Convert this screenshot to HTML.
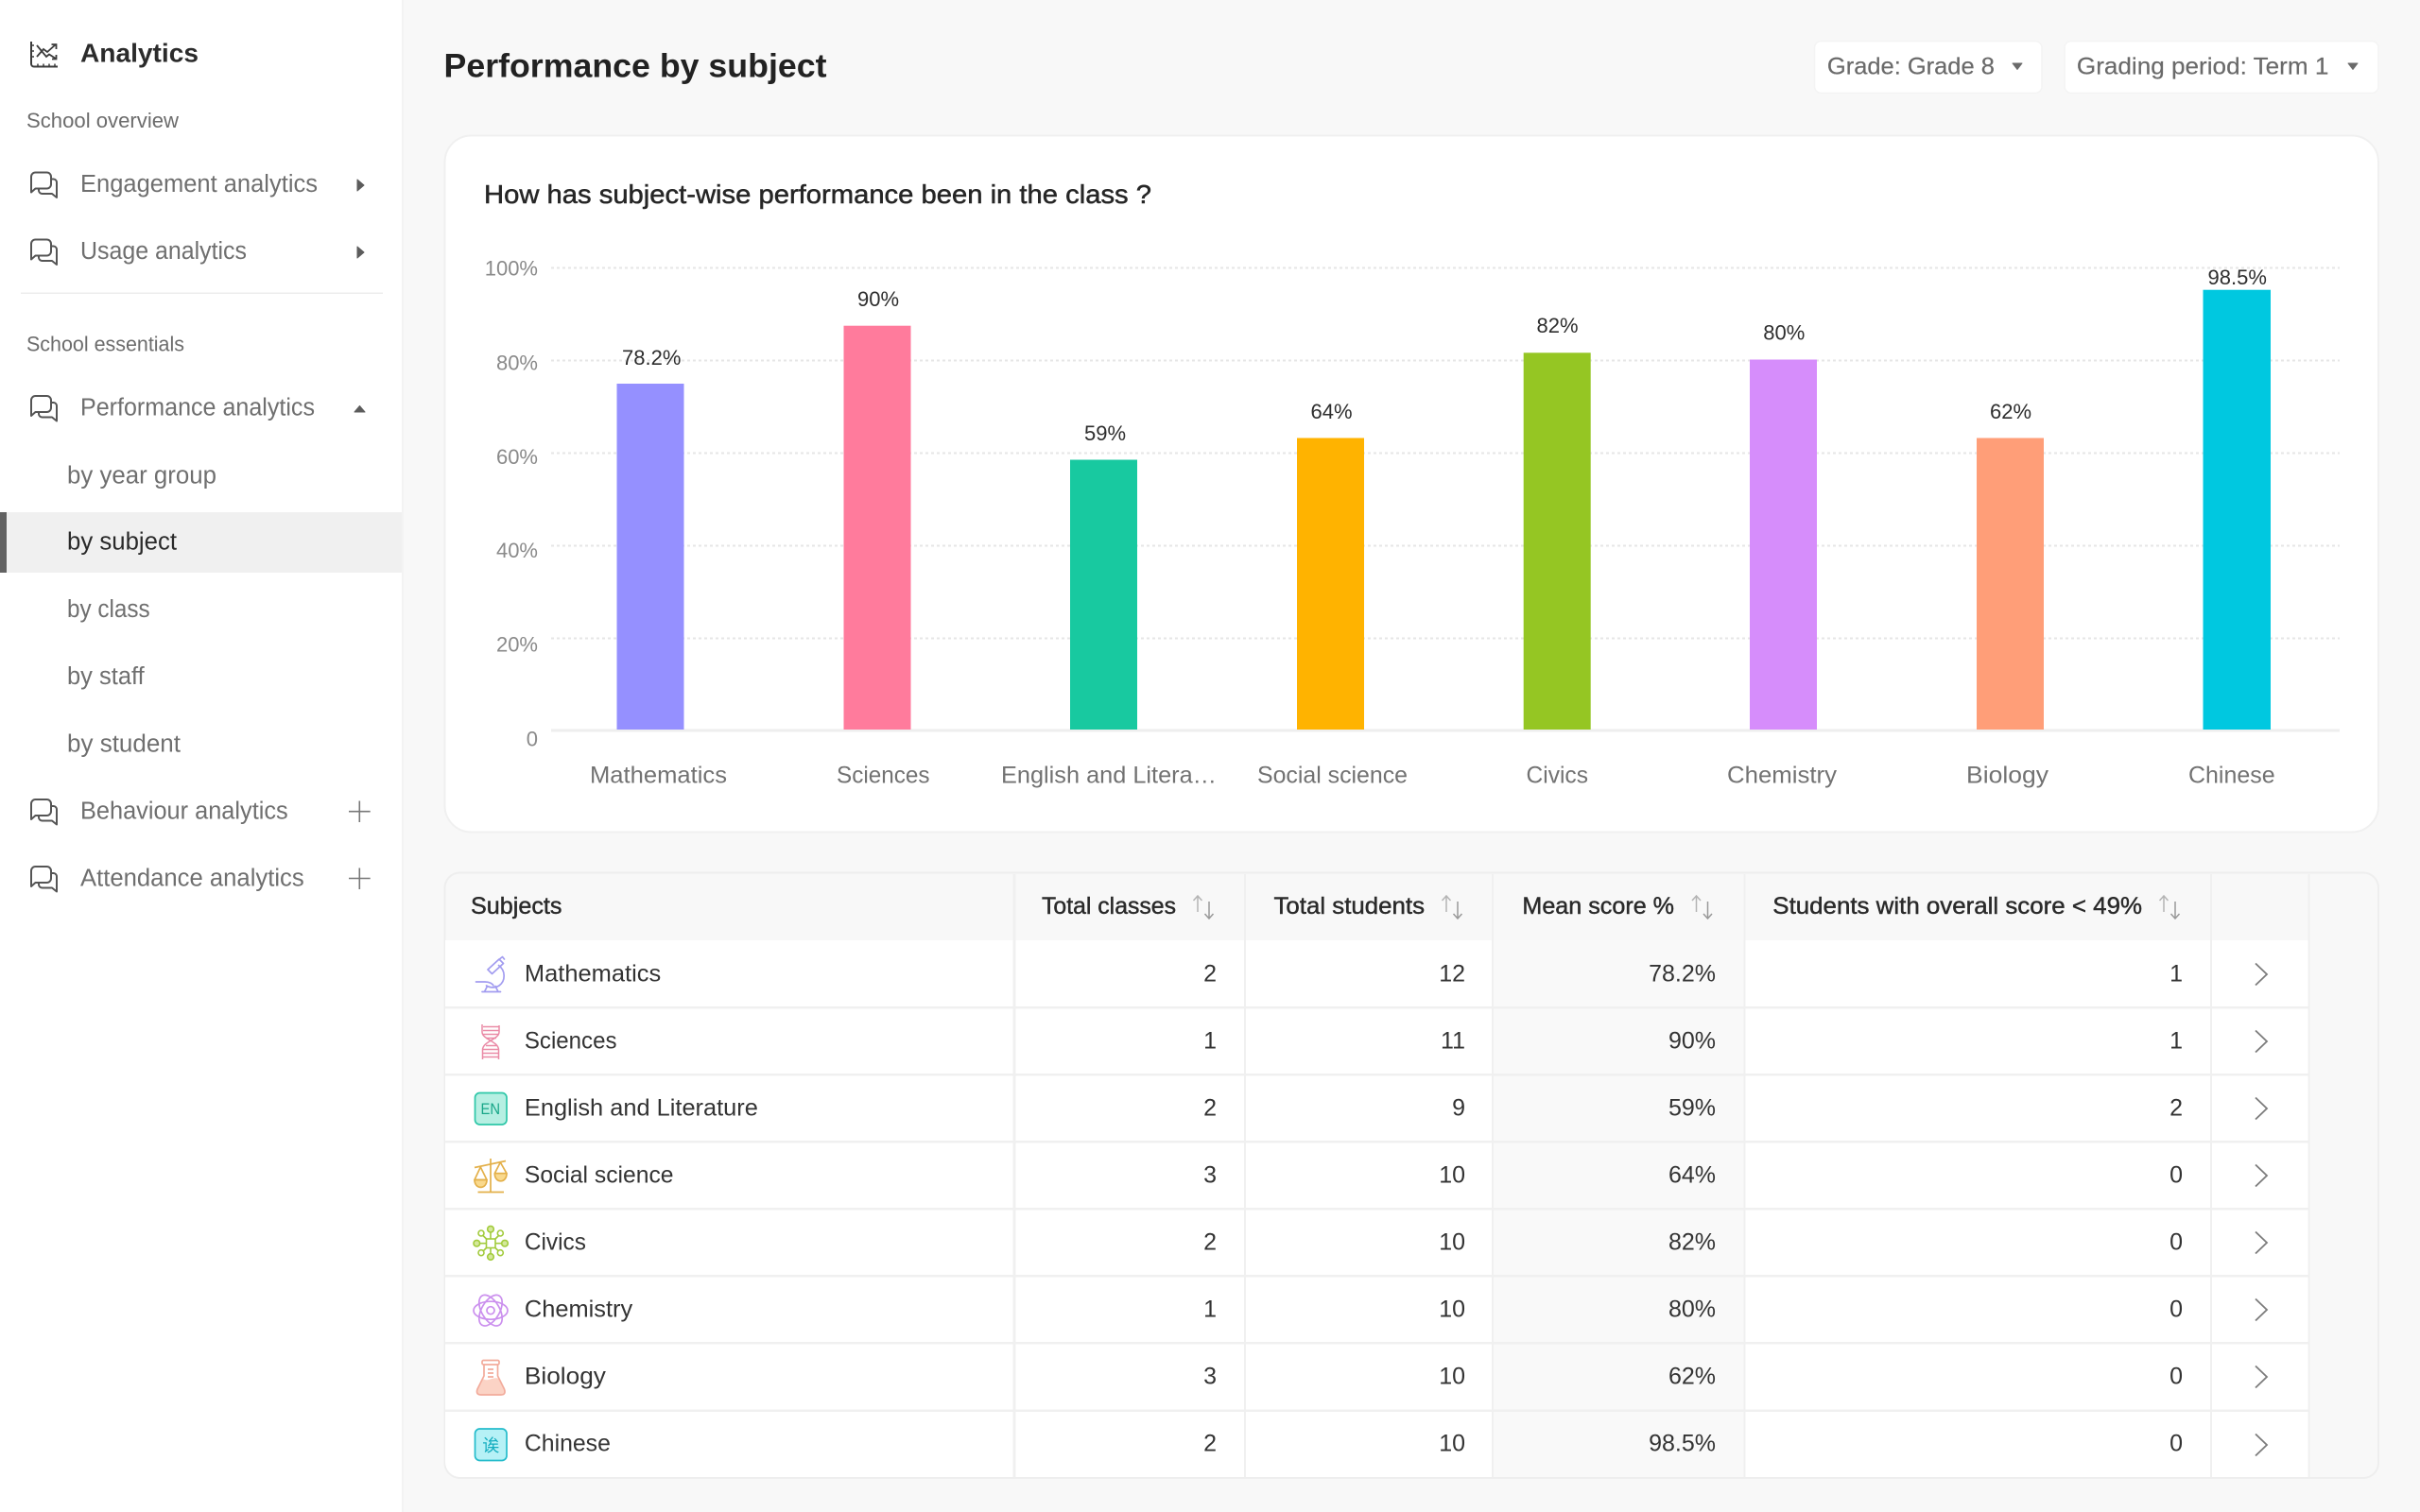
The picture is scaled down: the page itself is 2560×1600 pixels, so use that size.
<!DOCTYPE html>
<html lang="en">
<head>
<meta charset="utf-8">
<title>Performance by subject</title>
<style>
html,body{margin:0;padding:0;width:2560px;height:1600px;overflow:hidden;background:#f8f8f8}
svg{display:block;position:absolute;left:0;top:0}
text{font-family:"Liberation Sans","Noto Sans CJK SC",sans-serif;white-space:pre}
.nav{font-size:25.5px;fill:#6f6f6f;transform:translate(-1px,.6px)}
.cap{font-size:22px;fill:#6c6c6c;transform:translate(-1px,0)}
.act{font-size:25.5px;fill:#2a2a2a;transform:translate(-1px,.6px)}
.h1{font-size:35px;font-weight:700;fill:#222;transform:translate(-1.500px,0)}
.brand{font-size:27.5px;font-weight:700;fill:#2b2b2b;transform:translate(-1px,0)}
.dd{font-size:25px;fill:#6a6a6a;stroke:#6a6a6a;stroke-width:.2px;transform:translate(-.6px,0)}
.title{font-size:28px;fill:#262626;stroke:#262626;stroke-width:.5px;transform:translate(-1px,0)}
.yl{font-size:22px;fill:#8a8a8a;text-anchor:end}
.dl{font-size:22px;fill:#2e2e2e}
.xl{font-size:25px;fill:#727272}
.th{font-size:25px;fill:#2a2a2a;stroke:#2a2a2a;stroke-width:.45px;transform:translate(0,.4px)}
.td{font-size:25px;fill:#333;transform:translate(-.8px,.7px)}
.n{font-size:25px;fill:#333;text-anchor:end;transform:translate(0,.7px)}
</style>
</head>
<body>
<svg width="2560" height="1600" viewBox="0 0 2560 1600" xmlns="http://www.w3.org/2000/svg">
<defs>
<symbol id="chat" viewBox="0 0 29 28" overflow="visible">
<path d="M1 22V5.5A4.5 4.5 0 0 1 5.5 1H17.5A4.5 4.5 0 0 1 22 5.5V13.5A4.5 4.5 0 0 1 17.5 18H5.5Z" fill="none" stroke="#555" stroke-width="2" stroke-linejoin="round"/>
<path d="M22 8H24.5A3.5 3.5 0 0 1 28 11.5V27.5L23 23.5H12.5A3.5 3.5 0 0 1 9 20V18" fill="none" stroke="#555" stroke-width="2" stroke-linejoin="round"/>
</symbol>
<symbol id="sort" viewBox="0 0 24 24" overflow="visible">
<path d="M6 0V17M1.5 5L6 0L10.5 5" fill="none" stroke="#b4b4b4" stroke-width="1.500"/>
<path d="M18 6V24M13.5 19L18 24L22.500 19" fill="none" stroke="#999" stroke-width="1.500"/>
</symbol>
<symbol id="chev" viewBox="0 0 14 24" overflow="visible">
<path d="M1 0.5L13 12L1 23.5" fill="none" stroke="#7c7c7c" stroke-width="1.800"/>
</symbol>
<clipPath id="tc"><rect x="471" y="924" width="2044" height="639" rx="16"/></clipPath>
</defs>

<rect x="0" y="0" width="2560" height="1600" fill="#f8f8f8"/>

<!-- sidebar -->
<rect x="0" y="0" width="425" height="1600" fill="#fff"/>
<rect x="425" y="0" width="2" height="1600" fill="#f3f3f3"/>

<g fill="none" stroke="#3c3c3c">
<path d="M33 44V67.5A3 3 0 0 0 36 70.5H61" stroke-width="2"/>
<path d="M33 48H36M33 54H36M33 60H36M40 67.5V70.5M46 67.5V70.5M52 67.5V70.5M58 67.5V70.5" stroke-width="1.500"/>
<path d="M39 48L49 60L52 57.500L59 62M55 62.500H59.500V58" stroke-width="1.800"/>
<path d="M39 60L46 52L50 55L59 47M54.500 47H59.500V52" stroke-width="1.800"/>
</g>
<text class="brand" x="86" y="65.700" textLength="125" lengthAdjust="spacingAndGlyphs">Analytics</text>

<text class="cap" x="29" y="135" textLength="161" lengthAdjust="spacingAndGlyphs">School overview</text>

<use href="#chat" x="32" y="181.5" width="29" height="28"/>
<text class="nav" x="86" y="202.3" textLength="251" lengthAdjust="spacingAndGlyphs">Engagement analytics</text>
<path d="M378 190L385 196L378 202Z" fill="#5c5c5c" stroke="#5c5c5c" stroke-linejoin="round"/>

<use href="#chat" x="32" y="252.5" width="29" height="28"/>
<text class="nav" x="86" y="273.3" textLength="176" lengthAdjust="spacingAndGlyphs">Usage analytics</text>
<path d="M378 261L385 267L378 273Z" fill="#5c5c5c" stroke="#5c5c5c" stroke-linejoin="round"/>

<rect x="22" y="309.5" width="383" height="1.500" fill="#ececec"/>

<text class="cap" x="29" y="371.7" textLength="167" lengthAdjust="spacingAndGlyphs">School essentials</text>

<use href="#chat" x="32" y="418" width="29" height="28"/>
<text class="nav" x="86" y="439" textLength="248" lengthAdjust="spacingAndGlyphs">Performance analytics</text>
<path d="M375 436L380.5 429.5L386 436Z" fill="#5c5c5c" stroke="#5c5c5c" stroke-linejoin="round"/>

<text class="nav" x="72" y="510.7" textLength="158" lengthAdjust="spacingAndGlyphs">by year group</text>

<rect x="0" y="542" width="425" height="64" fill="#f0f0f0"/>
<rect x="0" y="542" width="7" height="64" fill="#626262"/>
<text class="act" x="72" y="581" textLength="116" lengthAdjust="spacingAndGlyphs">by subject</text>

<text class="nav" x="72" y="652.3" textLength="87.7" lengthAdjust="spacingAndGlyphs">by class</text>
<text class="nav" x="72" y="723.3" textLength="81.7" lengthAdjust="spacingAndGlyphs">by staff</text>
<text class="nav" x="72" y="794.7" textLength="120" lengthAdjust="spacingAndGlyphs">by student</text>

<use href="#chat" x="32" y="845" width="29" height="28"/>
<text class="nav" x="86" y="865.7" textLength="219.7" lengthAdjust="spacingAndGlyphs">Behaviour analytics</text>
<path d="M369 858.7H391.7M380.3 847.5V870" stroke="#777" stroke-width="1.600" fill="none"/>

<use href="#chat" x="32" y="916" width="29" height="28"/>
<text class="nav" x="86" y="936.7" textLength="236.7" lengthAdjust="spacingAndGlyphs">Attendance analytics</text>
<path d="M369 929.5H391.7M380.3 918.5V941" stroke="#777" stroke-width="1.600" fill="none"/>

<!-- header -->
<text class="h1" x="471" y="81.7" textLength="405" lengthAdjust="spacingAndGlyphs">Performance by subject</text>

<rect x="1919.5" y="43.5" width="240.5" height="55" rx="7" fill="#fff" stroke="#f4f4f4" stroke-width="1.500"/>
<text class="dd" x="1933.5" y="78.3" textLength="177" lengthAdjust="spacingAndGlyphs">Grade: Grade 8</text>
<path d="M2129 67H2139L2134 73.5Z" fill="#6a6a6a" stroke="#6a6a6a" stroke-linejoin="round"/>

<rect x="2184" y="43.5" width="332" height="55" rx="7" fill="#fff" stroke="#f4f4f4" stroke-width="1.500"/>
<text class="dd" x="2197.5" y="78.3" textLength="266.5" lengthAdjust="spacingAndGlyphs">Grading period: Term 1</text>
<path d="M2484 67H2494L2489 73.5Z" fill="#6a6a6a" stroke="#6a6a6a" stroke-linejoin="round"/>

<!-- chart card -->
<rect x="470.5" y="143.5" width="2045.5" height="737" rx="28" fill="#fff" stroke="#f0f0f0" stroke-width="2"/>
<text class="title" x="513" y="215" textLength="706" lengthAdjust="spacingAndGlyphs">How has subject-wise performance been in the class ?</text>

<g stroke="#e6e6e6" stroke-width="2" stroke-dasharray="3 3" fill="none">
<path d="M583 283.5H2475M583 381.5H2475M583 479.5H2475M583 577.5H2475M583 675.5H2475"/>
</g>
<rect x="583" y="771.5" width="1892" height="3" fill="#eeeeee"/>

<text class="yl" x="569" y="291.7">100%</text>
<text class="yl" x="569" y="391.3">80%</text>
<text class="yl" x="569" y="491">60%</text>
<text class="yl" x="569" y="590">40%</text>
<text class="yl" x="569" y="689.5">20%</text>
<text class="yl" x="569" y="789.3">0</text>

<rect x="652.5" y="406" width="71" height="366" fill="#9590ff"/>
<rect x="892.5" y="344.7" width="71" height="427.3" fill="#ff7b9c"/>
<rect x="1132" y="486.5" width="71" height="285.5" fill="#18c9a0"/>
<rect x="1372" y="463.5" width="71" height="308.5" fill="#ffb300"/>
<rect x="1611.7" y="373.3" width="71" height="398.7" fill="#95c623"/>
<rect x="1851" y="380.5" width="71" height="391.5" fill="#d68dfb"/>
<rect x="2091" y="463.5" width="71" height="308.5" fill="#ff9e78"/>
<rect x="2330.5" y="306.7" width="71.5" height="465.3" fill="#00c8e0"/>

<text class="dl" x="658" y="386">78.2%</text>
<text class="dl" x="907" y="324">90%</text>
<text class="dl" x="1147" y="466">59%</text>
<text class="dl" x="1386.5" y="443">64%</text>
<text class="dl" x="1625.5" y="352">82%</text>
<text class="dl" x="1865.3" y="359.5">80%</text>
<text class="dl" x="2105" y="443">62%</text>
<text class="dl" x="2335.5" y="301">98.5%</text>

<text class="xl" x="624" y="828.3" textLength="145" lengthAdjust="spacingAndGlyphs">Mathematics</text>
<text class="xl" x="885" y="828.3" textLength="98.500" lengthAdjust="spacingAndGlyphs">Sciences</text>
<text class="xl" x="1059" y="828.3" textLength="228" lengthAdjust="spacingAndGlyphs">English and Litera…</text>
<text class="xl" x="1330" y="828.3" textLength="159" lengthAdjust="spacingAndGlyphs">Social science</text>
<text class="xl" x="1614.5" y="828.3" textLength="65.5" lengthAdjust="spacingAndGlyphs">Civics</text>
<text class="xl" x="1827" y="828.3" textLength="116" lengthAdjust="spacingAndGlyphs">Chemistry</text>
<text class="xl" x="2080" y="828.3" textLength="87" lengthAdjust="spacingAndGlyphs">Biology</text>
<text class="xl" x="2315" y="828.3" textLength="91.6" lengthAdjust="spacingAndGlyphs">Chinese</text>

<!-- table card -->
<rect x="470.5" y="923.5" width="2045.5" height="640.5" rx="16" fill="#f8f8f8" stroke="#eeeeee" stroke-width="2"/>
<g clip-path="url(#tc)">
<rect x="471" y="995" width="1971.5" height="570" fill="#fff"/>
<rect x="1579" y="995" width="266" height="570" fill="#f9f9f9"/>
<g fill="#f0f0f0">
<rect x="471" y="1065" width="1971.5" height="2.500"/>
<rect x="471" y="1136" width="1971.5" height="2.500"/>
<rect x="471" y="1207" width="1971.5" height="2.500"/>
<rect x="471" y="1278" width="1971.5" height="2.500"/>
<rect x="471" y="1349" width="1971.5" height="2.500"/>
<rect x="471" y="1420" width="1971.5" height="2.500"/>
<rect x="471" y="1491.5" width="1971.5" height="2.500"/>
<rect x="1071.5" y="925" width="3" height="640"/>
<rect x="1316" y="925" width="2" height="640"/>
<rect x="1578" y="925" width="2" height="640"/>
<rect x="1844.5" y="925" width="2" height="640"/>
<rect x="2338" y="925" width="2" height="640"/>
<rect x="2441.5" y="925" width="2" height="640"/>
</g>
</g>

<text class="th" x="498" y="966.7" textLength="96.500" lengthAdjust="spacingAndGlyphs">Subjects</text>
<text class="th" x="1102" y="966.7" textLength="142" lengthAdjust="spacingAndGlyphs">Total classes</text>
<use href="#sort" x="1261" y="948" width="24" height="24"/>
<text class="th" x="1347.5" y="966.7" textLength="159.5" lengthAdjust="spacingAndGlyphs">Total students</text>
<use href="#sort" x="1524" y="948" width="24" height="24"/>
<text class="th" x="1610.4" y="966.7" textLength="160.6" lengthAdjust="spacingAndGlyphs">Mean score %</text>
<use href="#sort" x="1788.5" y="948" width="24" height="24"/>
<text class="th" x="1875.3" y="966.7" textLength="390.7" lengthAdjust="spacingAndGlyphs">Students with overall score &lt; 49%</text>
<use href="#sort" x="2283" y="948" width="24" height="24"/>

<!-- row icons -->
<g fill="none" stroke="#a29cf0" stroke-width="1.700" stroke-linejoin="round" stroke-linecap="round">
<path d="M516 1026L528 1015L532.5 1019.5L520.5 1030.5Z"/>
<path d="M529 1014.5L531.5 1012.5L533.5 1015"/>
<path d="M527.5 1021.5C535 1027 535 1038 528 1043C524 1045.5 518.5 1045.5 514.5 1043"/>
<path d="M503.5 1039H513C518 1039 521 1041 522 1043"/>
<path d="M510 1049.5H529.5M512.5 1049.500L515.5 1043.500M527 1049.500L524 1043.500"/>
</g>
<g fill="none" stroke="#ea8aa6" stroke-width="1.500">
<path d="M510 1084V1092C510 1100 527.5 1102 527.5 1111V1121"/>
<path d="M528 1085V1092C528 1100 510.5 1102 510.5 1111V1121"/>
<path d="M511 1086.5H528M511 1090.5H528M511 1094.5H528M514 1098.5H525M514 1106.5H525M511 1110.5H528M511 1114.5H528M511 1118.5H528"/>
</g>
<rect x="502.5" y="1156.5" width="33.5" height="33.5" rx="5" fill="#b6efe2" stroke="#2ec7a8" stroke-width="1.700"/>
<text x="508.5" y="1179" font-size="17" fill="#17a688" textLength="20.5" lengthAdjust="spacingAndGlyphs">EN</text>

<g fill="none" stroke="#e3b04a" stroke-width="1.700" stroke-linejoin="round">
<path d="M519 1226V1261M505.5 1261.500H533M502 1235.500L535 1228.500"/>
<path d="M508.3 1235L502 1248.500H515Z"/>
<path d="M529.3 1230L523.3 1241.700H536Z"/>
<path d="M502 1248.500C502 1259 515 1259 515 1248.500Z" fill="#f9d98d"/>
<path d="M523.3 1241.700C523.300 1252.500 536 1252.500 536 1241.700Z" fill="#f9d98d"/>
</g>

<g fill="none" stroke="#a2cb3c" stroke-width="1.600">
<rect x="514.5" y="1311" width="9.5" height="9.5"/>
<path d="M519 1311V1304M519 1320.5V1327M514.5 1315.7H507M524 1315.7H531M514.5 1311L511 1307.5M524 1311L527.5 1307.5M514.5 1320.5L511 1324M524 1320.5L527.5 1324"/>
<circle cx="519" cy="1300.7" r="3.300" fill="#d4e89b"/>
<circle cx="519" cy="1330" r="3.300" fill="#d4e89b"/>
<circle cx="504.3" cy="1315.7" r="3.300" fill="#d4e89b"/>
<circle cx="534" cy="1315.7" r="3.300" fill="#d4e89b"/>
<circle cx="509" cy="1305" r="3"/>
<circle cx="529.3" cy="1305" r="3"/>
<circle cx="509" cy="1325.7" r="3"/>
<circle cx="529.3" cy="1325.7" r="3"/>
</g>

<g fill="none" stroke="#cb90ee" stroke-width="1.700">
<ellipse cx="519" cy="1386.7" rx="18" ry="9.500"/>
<ellipse cx="519" cy="1386.7" rx="18" ry="9.500" transform="rotate(60 519 1386.7)"/>
<ellipse cx="519" cy="1386.7" rx="18" ry="9.500" transform="rotate(120 519 1386.7)"/>
<circle cx="519" cy="1386.7" r="4"/>
</g>

<path d="M505 1470L511 1459C516 1463 522 1456 527.5 1459L533.5 1470Q535 1476 530 1476H509Q503 1476 505 1470Z" fill="#fbd3c5"/>
<g fill="none" stroke="#f2ab9b" stroke-width="1.700" stroke-linejoin="round">
<rect x="510" y="1439.5" width="18" height="4.500" rx="1.500"/>
<path d="M512 1444V1456L505 1470Q503 1476 509 1476H530Q535.5 1476 533.5 1470L526.5 1456V1444"/>
<path d="M516 1449H522M516 1453H522M516 1457H522"/>
</g>

<rect x="502.5" y="1512" width="33.5" height="33.5" rx="5" fill="#b6f1f6" stroke="#25bccb" stroke-width="1.700"/>
<text x="519.3" y="1536" font-size="18" fill="#14adbf" text-anchor="middle">诶</text>

<!-- row text -->
<text class="td" x="555.7" y="1038" textLength="144.3" lengthAdjust="spacingAndGlyphs">Mathematics</text>
<text class="td" x="555.7" y="1109" textLength="97.6" lengthAdjust="spacingAndGlyphs">Sciences</text>
<text class="td" x="555.7" y="1180" textLength="247" lengthAdjust="spacingAndGlyphs">English and Literature</text>
<text class="td" x="555.7" y="1251" textLength="157.6" lengthAdjust="spacingAndGlyphs">Social science</text>
<text class="td" x="555.7" y="1322" textLength="65" lengthAdjust="spacingAndGlyphs">Civics</text>
<text class="td" x="555.7" y="1393" textLength="114.3" lengthAdjust="spacingAndGlyphs">Chemistry</text>
<text class="td" x="555.7" y="1464" textLength="86" lengthAdjust="spacingAndGlyphs">Biology</text>
<text class="td" x="555.7" y="1535" textLength="91" lengthAdjust="spacingAndGlyphs">Chinese</text>

<g>
<text class="n" x="1287" y="1038">2</text><text class="n" x="1550" y="1038">12</text><text class="n" x="1815" y="1038">78.2%</text><text class="n" x="2309" y="1038">1</text>
<text class="n" x="1287" y="1109">1</text><text class="n" x="1550" y="1109">11</text><text class="n" x="1815" y="1109">90%</text><text class="n" x="2309" y="1109">1</text>
<text class="n" x="1287" y="1180">2</text><text class="n" x="1550" y="1180">9</text><text class="n" x="1815" y="1180">59%</text><text class="n" x="2309" y="1180">2</text>
<text class="n" x="1287" y="1251">3</text><text class="n" x="1550" y="1251">10</text><text class="n" x="1815" y="1251">64%</text><text class="n" x="2309" y="1251">0</text>
<text class="n" x="1287" y="1322">2</text><text class="n" x="1550" y="1322">10</text><text class="n" x="1815" y="1322">82%</text><text class="n" x="2309" y="1322">0</text>
<text class="n" x="1287" y="1393">1</text><text class="n" x="1550" y="1393">10</text><text class="n" x="1815" y="1393">80%</text><text class="n" x="2309" y="1393">0</text>
<text class="n" x="1287" y="1464">3</text><text class="n" x="1550" y="1464">10</text><text class="n" x="1815" y="1464">62%</text><text class="n" x="2309" y="1464">0</text>
<text class="n" x="1287" y="1535">2</text><text class="n" x="1550" y="1535">10</text><text class="n" x="1815" y="1535">98.5%</text><text class="n" x="2309" y="1535">0</text>
</g>

<use href="#chev" x="2385" y="1019" width="14" height="24"/>
<use href="#chev" x="2385" y="1090" width="14" height="24"/>
<use href="#chev" x="2385" y="1161" width="14" height="24"/>
<use href="#chev" x="2385" y="1232" width="14" height="24"/>
<use href="#chev" x="2385" y="1303" width="14" height="24"/>
<use href="#chev" x="2385" y="1374" width="14" height="24"/>
<use href="#chev" x="2385" y="1445" width="14" height="24"/>
<use href="#chev" x="2385" y="1517" width="14" height="24"/>
</svg>
</body>
</html>
